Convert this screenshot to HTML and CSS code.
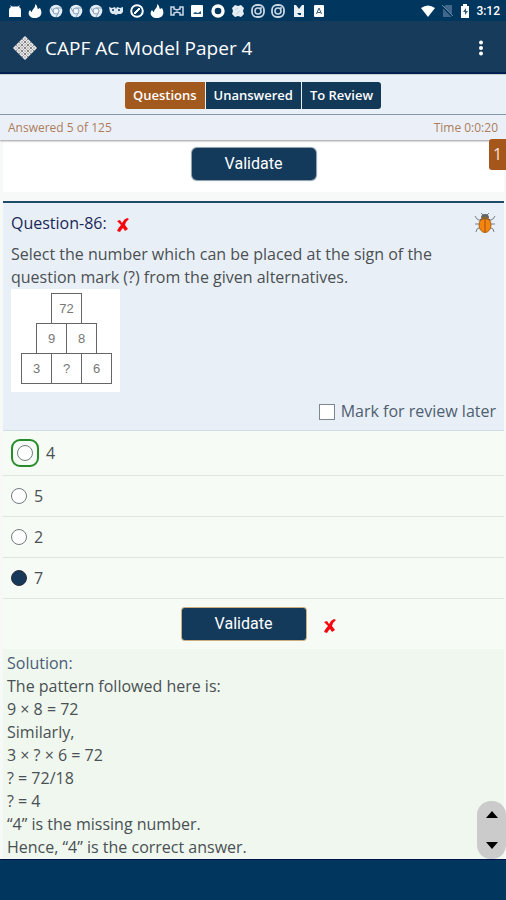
FILE: index.html
```html
<!DOCTYPE html>
<html lang="en">
<head>
<meta charset="utf-8">
<meta name="viewport" content="width=device-width, initial-scale=1">
<title>CAPF AC Model Paper 4</title>
<link rel="stylesheet" href="styles.css">
</head>
<body>
<svg class="defs" width="0" height="0" aria-hidden="true">
  <symbol id="flame" viewBox="0 0 14 14"><path d="M7 0c3 2 2 4 3 5l2-1c3 5 1 10-5 10C1 14-1 9 2 6c1 1 1 2 2 2C4 5 8 4 7 0z" fill="#fff"/></symbol>
  <symbol id="chrome" viewBox="0 0 14 14"><circle cx="7" cy="7" r="6.3" fill="#e3edf5"/><circle cx="7" cy="7" r="3" fill="none" stroke="#8ba5bd"/><path d="M7 4h6M4.500 8.500 2 4M9.500 8.500 7 13" stroke="#8ba5bd" fill="none"/><circle cx="7" cy="7" r="1.500" fill="#fff"/></symbol>
  <symbol id="insta" viewBox="0 0 14 14"><rect x="1" y="1" width="12" height="12" rx="5" fill="none" stroke="#c9d7e4" stroke-width="1.800"/><circle cx="7" cy="7" r="3" fill="none" stroke="#c9d7e4" stroke-width="1.600"/><circle cx="10" cy="4" r="1" fill="#c9d7e4"/></symbol>
  <symbol id="cross" viewBox="0 0 12 14"><path d="M0 3l3-1 2 3q2-4 5-5l2 1q-3 2-4 6l3 4-3 2-2-3q-2 2-3 4l-3-1q1-3 4-6z" fill="#f5080d"/></symbol>
</svg>
<header>
  <div class="status">
    <div class="notices" aria-hidden="true">
      <svg viewBox="0 0 14 14"><path d="M1 13V6q0-2 2-3L2 1l2 1.500h6L12 1l-1 2q2 1 2 3v7z" fill="#fff"/></svg>
      <svg><use href="#flame"/></svg>
      <svg><use href="#chrome"/></svg>
      <svg><use href="#chrome"/></svg>
      <svg><use href="#chrome"/></svg>
      <svg viewBox="0 0 14 14"><path d="M0 3l3 1 3-1 1 2 1-2 3 1 3-1v5l-2 2H9l-2 1-2-1H3L1 8z" fill="#dce7f0"/><circle cx="4" cy="6" r="1" fill="#01365f"/><circle cx="10" cy="6" r="1" fill="#01365f"/></svg>
      <svg viewBox="0 0 14 14"><circle cx="7" cy="7" r="5.800" fill="none" stroke="#fff" stroke-width="2"/><path d="M4 9l5-5 1 1-5 5z" fill="#fff" stroke="#fff"/></svg>
      <svg><use href="#flame"/></svg>
      <svg viewBox="0 0 14 14"><path d="M1 3h3v2l3 1 3-1V3h3v8h-3V9L7 8 4 9v2H1z" fill="none" stroke="#cbd9e6" stroke-width="1.500"/></svg>
      <svg viewBox="0 0 14 14"><rect x="1" y="1" width="12" height="12" rx="1" fill="#fff"/><path d="M3 10h8V7L8 9 5 8z" fill="#285779"/></svg>
      <svg viewBox="0 0 14 14"><circle cx="7" cy="7" r="5" fill="none" stroke="#fff" stroke-width="3.400"/></svg>
      <svg viewBox="0 0 14 14"><path d="M4 1l3 1 3-1 3 3-1 3 1 3-3 3-3-1-3 1-3-3 1-3-1-3z" fill="#e5edf4"/><path d="M4 6l3-2M5 10l4-3" stroke="#c3d3e0"/></svg>
      <svg><use href="#insta"/></svg>
      <svg><use href="#insta"/></svg>
      <svg viewBox="0 0 14 14"><path d="M2 1h2l3 4 3-4h2v12H2z" fill="#e8eff5"/><path d="M5 9h4v2H7z" fill="#01365f"/></svg>
      <svg viewBox="0 0 14 14"><rect x="2" y="1" width="10" height="12" rx="1" fill="#fff"/><path d="M4.500 10L7 4l2.500 6M5.500 8.500h3" fill="none" stroke="#31597a"/></svg>
    </div>
    <div class="system">
      <svg class="wifi" viewBox="0 0 16 14" aria-hidden="true"><path d="M1 4q7-5 14 0L8 13z" fill="#fff"/></svg>
      <svg viewBox="0 0 14 14" aria-hidden="true"><path d="M3 3l3-2h6v12H3z" fill="#41678a"/><path d="M2 2l11 11" stroke="#01365f" stroke-width="2"/><path d="M2 1l11 11" stroke="#6c8aa5"/></svg>
      <svg viewBox="0 0 14 14" aria-hidden="true"><path d="M3 2h2V0h4v2h2v12H3z" fill="#fff"/><path d="M8 4L5 8h2v3l3-4H8z" fill="#31597a"/></svg>
      <span>3:12</span>
    </div>
  </div>
  <div class="appbar">
    <svg class="logo" viewBox="0 0 26 26" aria-hidden="true">
      <path d="M13 1l12 12-12 12L1 13z" fill="#e8e8e8"/>
      <path d="M10 4l12 12M7 7l12 12M4 10l12 12M16 4L4 16M19 7L7 19M22 10L10 22" stroke="#858585" stroke-width="1"/>
      <path d="M11.500 2.500l12 12M8.500 5.500l12 12M5.500 8.500l12 12M2.500 11.500l12 12M14.500 2.500l-12 12M17.500 5.500l-12 12M20.500 8.500l-12 12M23.500 11.500l-12 12" stroke="#b5b5b5" stroke-width=".7"/>
    </svg>
    <h1>CAPF AC Model Paper 4</h1>
    <button class="more" aria-label="More options"><svg viewBox="0 0 6 16"><circle cx="3" cy="2.500" r="2" fill="#fff"/><circle cx="3" cy="8" r="2" fill="#fff"/><circle cx="3" cy="13.500" r="2" fill="#fff"/></svg></button>
  </div>
</header>
<nav class="tabs">
  <button class="active">Questions</button><button>Unanswered</button><button>To Review</button>
</nav>
<div class="progress"><span>Answered 5 of 125</span><span>Time 0:0:20</span><b class="badge">1</b></div>
<main>
  <section class="previous"><button class="validate">Validate</button></section>
  <section class="question">
    <div class="heading">
      <h2>Question-86:</h2>
      <svg class="cross" role="img" aria-label="Wrong"><use href="#cross"/></svg>
      <button class="bug" aria-label="Report a problem"><svg viewBox="0 0 22 22">
        <path d="M7 9L3 7 1 4M6 12H1M7 15l-4 2-1 3M15 9l4-2 2-3M16 12h5M15 15l4 2 1 3M9 3L7 1M13 3l2-2" fill="none" stroke="#75818c"/>
        <path d="M7 6q0-4 4-4t4 4z" fill="#626466"/>
        <ellipse cx="11" cy="13" rx="6" ry="7.500" fill="#f5850f" stroke="#a8671f"/>
        <path d="M11 6v14" stroke="#9b5310"/><path d="M6 8q5-3 10 0" stroke="#8a6032" fill="none" stroke-width="1.500"/>
      </svg></button>
    </div>
    <p>Select the number which can be placed at the sign of the question mark (?) from the given alternatives.</p>
    <div class="pyramid">
      <div><span>72</span></div>
      <div><span>9</span><span>8</span></div>
      <div><span>3</span><span>?</span><span>6</span></div>
    </div>
    <label class="review"><input type="checkbox"> Mark for review later</label>
  </section>
  <section class="options">
    <label class="correct"><span class="ring"><input type="radio" name="answer"></span>4</label>
    <label><input type="radio" name="answer">5</label>
    <label><input type="radio" name="answer">2</label>
    <label><input type="radio" name="answer" checked>7</label>
  </section>
  <section class="check">
    <button class="validate focused">Validate</button>
    <svg class="cross" role="img" aria-label="Wrong"><use href="#cross"/></svg>
  </section>
  <section class="solution">
    <h3>Solution:</h3>
    <p>The pattern followed here is:<br>9 × 8 = 72<br>Similarly,<br>3 × ? × 6 = 72<br>? = 72/18<br>? = 4<br>“4” is the missing number.<br>Hence, “4” is the correct answer.</p>
    <div class="scroller">
      <button aria-label="Scroll up"><svg viewBox="0 0 12 7"><path d="M0 7l6-7 6 7z"/></svg></button>
      <button aria-label="Scroll down"><svg viewBox="0 0 12 7"><path d="M0 0h12L6 7z"/></svg></button>
    </div>
  </section>
</main>
<footer></footer>
</body>
</html>
```
FILE: styles.css
```css
* { box-sizing: border-box; }
body {
  margin: 0;
  min-height: 100vh;
  display: flex;
  flex-direction: column;
  background: #f7f8f8;
  color: #4a5053;
  font: 16px/23px "Open Sans", sans-serif;
}
h1, h2, h3, p { margin: 0; font-weight: 400; }
button { font: inherit; border: 0; padding: 0; cursor: pointer; }
svg { display: block; }
.defs { position: absolute; }

.status {
  height: 21px;
  display: flex;
  justify-content: space-between;
  align-items: center;
  padding: 0 6px 0 8px;
  background: #01365f;
}
.notices { display: flex; justify-content: space-between; flex: 0 1 318px; }
.status svg { width: 14px; height: 14px; }
.system { display: flex; align-items: center; gap: 4px; color: #fff; font: 500 12px/20px Roboto, sans-serif; }
.status .wifi { width: 16px; }

.appbar {
  height: 53px;
  display: flex;
  align-items: center;
  gap: 7px;
  padding: 2px 16px 0 12px;
  background: #173b5b;
  border-bottom: 2px solid #00204f;
}
.logo { width: 26px; height: 26px; }
.appbar h1 { flex: 1; color: #fff; font: 500 19px/24px "Open Sans", sans-serif; }
.more { width: 18px; height: 24px; background: none; }
.more svg { width: 6px; height: 16px; margin: auto; }

.tabs {
  display: flex;
  justify-content: center;
  gap: 1px;
  padding: 7px 0 5px;
  background: #eaf0f7;
  border-top: 1px solid #c5cdcd;
  border-bottom: 1px solid #8496aa;
}
.tabs button {
  height: 27px;
  padding: 0 8px;
  background: #133959;
  color: #fff;
  font-size: 13px;
  font-weight: 600;
}
.tabs button:first-child { border-radius: 3px 0 0 3px; }
.tabs button:last-child { border-radius: 0 3px 3px 0; }
.tabs .active { background: #a2591d; }

.progress {
  position: relative;
  height: 25px;
  display: flex;
  justify-content: space-between;
  align-items: center;
  padding: 0 8px;
  background: #ebf0f8;
  color: #ad7d5c;
  font-size: 12px;
  box-shadow: 0 1px 2px #999;
}
.badge {
  position: absolute;
  right: 0;
  top: 24px;
  width: 17px;
  height: 31px;
  border-radius: 3px 0 0 3px;
  background: #a5561a;
  color: #f5e4d8;
  font: 16px/31px "Open Sans", sans-serif;
  text-align: center;
}

main { flex: 1; display: flex; flex-direction: column; padding: 0 2px 0 3px; }
.previous {
  display: flex;
  justify-content: center;
  padding: 8px 0 12px;
  margin-bottom: 9px;
  background: #fff;
}
.validate {
  width: 124px;
  height: 32px;
  border-radius: 5px;
  background: #143a5b;
  color: #fff;
  font: 16px/32px Roboto, sans-serif;
  box-shadow: 0 0 1px 1px #8999a6;
}
.question {
  display: flex;
  flex-direction: column;
  padding: 8px 8px 7px;
  background: #e9eff6;
  border-top: 2px solid #1d4b68;
  border-bottom: 1px solid #d3dbe3;
}
.heading { display: flex; align-items: center; height: 24px; margin-bottom: 8px; }
.heading h2 { font-size: 16px; font-weight: 500; color: #1a2858; margin-right: 10px; }
.cross { width: 12px; height: 14px; }
.heading .cross { margin-top: 3px; }
.bug { margin-left: auto; background: none; }
.bug svg { width: 22px; height: 22px; }
.pyramid {
  align-self: flex-start;
  width: 109px;
  padding: 4px 0 8px;
  background: #fff;
  font: 13px/29px "Liberation Sans", sans-serif;
  color: #777;
}
.pyramid div { display: flex; justify-content: center; margin-right: -2px; }
.pyramid div + div { margin-top: -1px; }
.pyramid span { width: 31px; height: 31px; border: 1px solid #666; text-align: center; }
.pyramid span + span { margin-left: -1px; }
.review { align-self: flex-end; display: flex; align-items: center; gap: 6px; margin-top: 8px; color: #4d6071; }
.review input { appearance: none; width: 16px; height: 16px; margin: 0; border: 1px solid #7d8790; background: #fff; }

.options label {
  display: flex;
  align-items: center;
  gap: 7px;
  min-height: 41px;
  padding: 0 8px;
  background: #f6fbf6;
  border-bottom: 1px solid #dfe5e1;
}
.options .correct { min-height: 45px; }
.options input { appearance: none; width: 16px; height: 16px; margin: 0; border: 1px solid #737b80; border-radius: 50%; background: #fff; }
.options input:checked { background: #173858; border-color: #302c3d; }
.ring { display: flex; padding: 4px; border: 2px solid #268c2b; border-radius: 9px; }

.check {
  display: grid;
  grid-template-columns: 1fr auto 1fr;
  align-items: center;
  padding: 9px 20px 9px 0;
  background: #f6fbf6;
}
.check .validate { grid-column: 2; }
.check .focused { box-shadow: 0 0 0 1px #c9ad7c; border-radius: 3px; }
.check .cross { margin: 4px 0 0 18px; }
.solution { position: relative; flex: 1; padding: 3px 4px 0; background: #eff7ef; }
.solution h3 { font-size: 16px; color: #4c5d78; }
.scroller {
  position: absolute;
  right: -2px;
  bottom: 0;
  width: 29px;
  height: 58px;
  display: flex;
  flex-direction: column;
  justify-content: space-between;
  align-items: center;
  padding: 10px 0;
  border-radius: 14px;
  background: #cbcbcb;
}
.scroller button { background: none; }
.scroller svg { width: 12px; height: 7px; }
footer { height: 42px; background: #01365f; border-top: 1px solid #00104a; }
```
